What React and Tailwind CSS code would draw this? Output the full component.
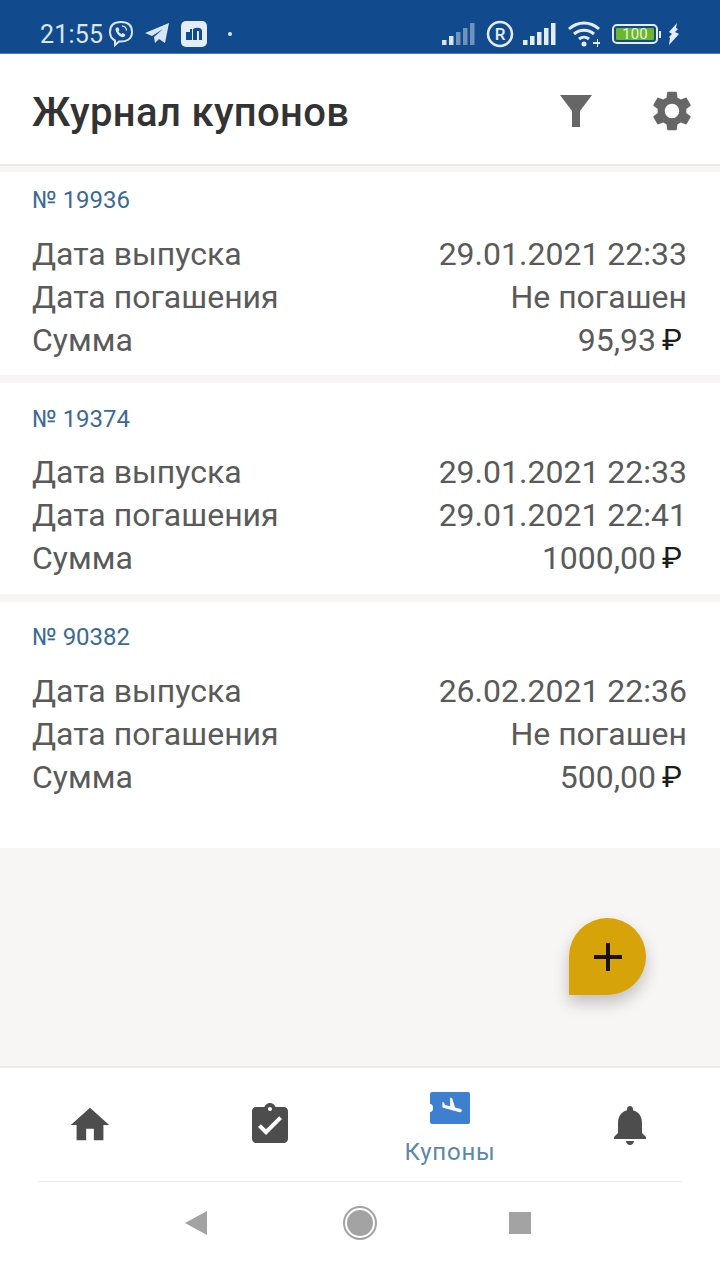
const GEAR = "M19.14,12.94c0.04-0.3,0.06-0.61,0.06-0.94c0-0.32-0.02-0.64-0.07-0.94l2.03-1.58c0.18-0.14,0.23-0.41,0.12-0.61l-1.92-3.32c-0.12-0.22-0.37-0.29-0.59-0.22l-2.39,0.96c-0.5-0.38-1.03-0.7-1.62-0.94L14.4,2.81c-0.04-0.24-0.24-0.41-0.48-0.41h-3.84c-0.24,0-0.43,0.17-0.47,0.41L9.25,5.35C8.66,5.59,8.12,5.92,7.63,6.29L5.24,5.33c-0.22-0.08-0.47,0-0.59,0.22L2.74,8.87C2.62,9.08,2.66,9.34,2.86,9.48l2.03,1.58C4.84,11.36,4.8,11.69,4.8,12s0.02,0.64,0.07,0.94l-2.03,1.58c-0.18,0.14-0.23,0.41-0.12,0.61l1.92,3.32c0.12,0.22,0.37,0.29,0.59,0.22l2.39-0.96c0.5,0.38,1.03,0.7,1.62,0.94l0.36,2.54c0.05,0.24,0.24,0.41,0.48,0.41h3.84c0.24,0,0.44-0.17,0.47-0.41l0.36-2.54c0.59-0.24,1.13-0.56,1.62-0.94l2.39,0.96c0.22,0.08,0.47,0,0.59-0.22l1.92-3.32c0.12-0.22,0.07-0.47-0.12-0.61L19.14,12.94z M12,15.6c-1.98,0-3.6-1.62-3.6-3.6s1.62-3.6,3.6-3.6s3.6,1.62,3.6,3.6S13.98,15.6,12,15.6z";

const coupons = [
  { no: "№ 19936", issued: "29.01.2021 22:33", paid: "Не погашен", sum: "95,93", box: "h-[203px] pt-[11px]", gap: "mb-[15px]" },
  { no: "№ 19374", issued: "29.01.2021 22:33", paid: "29.01.2021 22:41", sum: "1000,00", box: "h-[211px] pt-[19px]", gap: "mb-[14px]" },
  { no: "№ 90382", issued: "26.02.2021 22:36", paid: "Не погашен", sum: "500,00", box: "h-[246px] pt-[18px]", gap: "mb-[15px]" },
];

function Signal({ dim }) {
  const hs = [5, 9, 13, 17, 22];
  return (
    <svg width="34" height="22" viewBox="0 0 34 22">
      {hs.map((h, i) => (
        <rect key={i} x={i * 7} y={22 - h} width="4.5" height={h} fill="#e4edf7" opacity={dim ? (i < 2 ? 0.95 : 0.45) : 1} />
      ))}
    </svg>
  );
}

function StatusBar() {
  return (
    <div className="h-[54px] bg-[#124a8e] flex items-center pl-[40px] pr-[40px] pt-[15px] text-[#d9e6f5] border-b border-[#4d7db5]">
      <span className="text-[25px] leading-none tracking-[0.2px]">21:55</span>
      <svg className="ml-[5px]" width="26" height="28" viewBox="0 0 26 28" fill="none">
        <path d="M13 2c-6 0-11 2.500-11 10 0 4.500 2 7 5 8.500v4.500l4-3.500c7 .5 13-2 13-9.500C24 4.500 19 2 13 2z" stroke="#d9e6f5" strokeWidth="2" />
        <path d="M8 8c1-1 2-1 2.500 0l1 2-1 1c.5 1.500 1.500 2.500 3 3l1-1 2 1c1 .5 1 1.500 0 2.500-1.500 1.500-4 .5-6-1.500S6.500 9.500 8 8z" fill="#d9e6f5" />
        <path d="M14 6c2.500 0 4.500 2 4.500 4.500" stroke="#d9e6f5" strokeWidth="1.300" />
      </svg>
      <svg className="ml-[10px]" width="26" height="24" viewBox="0 0 26 24">
        <path d="M1 11 25 1l-4 20-6-4-4 4-1-6 9-8-11 7z" fill="#d9e6f5" />
      </svg>
      <div className="ml-[11px] w-[26px] h-[26px] rounded-[5px] bg-[#e3edf8] flex items-center justify-center">
        <svg width="18" height="16" viewBox="0 0 18 16">
          <path d="M1 6h4V3h2v11H1zM8 3c3-2 9-2 9 2v9h-3V5h-2v9H8z" fill="#124a8e" />
        </svg>
      </div>
      <span className="ml-[21px] w-[4px] h-[4px] rounded-full bg-[#d9e6f5]" />
      <div className="ml-auto flex items-center">
        <Signal dim />
        <svg className="ml-[10px]" width="28" height="28" viewBox="0 0 28 28" fill="none">
          <circle cx="14" cy="14" r="12" stroke="#e4edf7" strokeWidth="2.500" />
          <text x="14" y="20" textAnchor="middle" fontSize="17" fontFamily="Roboto, sans-serif" fontWeight="500" fill="#e4edf7">R</text>
        </svg>
        <div className="ml-[9px]"><Signal /></div>
        <svg className="ml-[10px]" width="36" height="28" viewBox="0 0 36 28" fill="none">
          <path d="M2 9c9-8 21-8 30 0M7 14c6-5 14-5 20 0M12 19c3-2.500 7-2.500 10 0" stroke="#e4edf7" strokeWidth="3" />
          <circle cx="17" cy="24" r="2.500" fill="#e4edf7" />
          <path d="M26 22h4v-3h1v3h2v2h-2v3h-1v-3h-4z" fill="#e4edf7" />
        </svg>
        <div className="ml-[9px] w-[46px] h-[20px] rounded-[5px] border-2 border-[#e4edf7] p-[2px] flex">
          <div className="w-[38px] h-[12px] bg-[#6cb52d] rounded-[1px] flex items-center justify-center text-[15px] leading-none text-[#e8f5d8]">100</div>
        </div>
        <span className="ml-[1px] w-[2px] h-[7px] bg-[#e4edf7]" />
        <svg className="ml-[7px]" width="12" height="22" viewBox="0 0 12 22">
          <path d="M9 0 1 9l3 2-3 3 1 1-1 7 10-11-4-2 3-3-2-1z" fill="#e4edf7" />
        </svg>
      </div>
    </div>
  );
}

function Header() {
  return (
    <div className="h-[112px] bg-white flex items-center pl-[32px] pr-[29px] border-b-2 border-[#e9e9e7] pt-[4px]">
      <h1 className="relative top-[2px] text-[40px] leading-none font-medium text-[#333] tracking-[0.35px]">Журнал купонов</h1>
      <svg className="ml-auto" width="32" height="32" viewBox="0 0 32 32">
        <path d="M0 0h32L20 16v16h-8V16z" fill="#666" />
      </svg>
      <svg className="ml-[56px] -mr-[5px]" width="48" height="48" viewBox="0 0 24 24">
        <path d={GEAR} fill="#666" />
      </svg>
    </div>
  );
}

function Row({ label, children }) {
  return (
    <div className="flex justify-between items-center h-[43px] text-[32px] leading-none text-[#5a5a5a]">
      <span>{label}</span>
      {children}
    </div>
  );
}

function Card({ c }) {
  return (
    <div className={`bg-white pl-[32px] pr-[33px] ${c.box}`}>
      <div className={`text-[24px] leading-[34px] text-[#3b6a96] ${c.gap}`}>{c.no}</div>
      <Row label="Дата выпуска"><span>{c.issued}</span></Row>
      <Row label="Дата погашения"><span>{c.paid}</span></Row>
      <Row label="Сумма">
        <span className="flex items-center pr-[5px]">
          {c.sum}
          <span className="ml-[6px] text-[#1c1c1c] text-[30px]">₽</span>
        </span>
      </Row>
    </div>
  );
}

function BottomNav() {
  return (
    <div className="h-[214px] bg-white border-t-2 border-[#ecebe9]">
      <div className="grid grid-cols-4 h-[113px]">
        <div className="flex items-center justify-center">
          <svg width="46" height="46" viewBox="0 0 24 24"><path d="M10 20v-6h4v6h5v-8h3L12 3 2 12h3v8z" fill="#4d4d4d" /></svg>
        </div>
        <div className="flex items-center justify-center">
          <svg width="48" height="48" viewBox="0 0 24 24"><path d="M19 3h-4.180C14.400 1.840 13.300 1 12 1c-1.300 0-2.400.84-2.820 2H5c-1.100 0-2 .9-2 2v14c0 1.100.9 2 2 2h14c1.100 0 2-.9 2-2V5c0-1.100-.9-2-2-2zm-7 0c.55 0 1 .45 1 1s-.45 1-1 1-1-.45-1-1 .45-1 1-1zm-2 14l-4-4 1.410-1.410L10 14.170l6.590-6.590L18 9l-8 8z" fill="#4d4d4d" /></svg>
        </div>
        <div className="flex flex-col items-center pt-[24px]">
          <svg width="40" height="32" viewBox="0 0 40 32">
            <path d="M2 0h36a2 2 0 0 1 2 2v28a2 2 0 0 1-2 2H2a2 2 0 0 1-2-2V20a3 4 0 0 0 0-8V2a2 2 0 0 1 2-2z" fill="#3f7fd0" />
            <path transform="translate(9.500 3.500) scale(1.050)" d="M9.680 13.270l4.350 1.160 5.310 1.420c.8.21 1.620-.26 1.840-1.060.21-.8-.26-1.620-1.060-1.840l-5.310-1.420-2.760-9.020L10.120 2v8.280L5.150 8.950l-.93-2.320-1.450-.39v5.170l1.600.43 5.310 1.430z" fill="#fff" />
          </svg>
          <span className="mt-[15px] text-[24px] leading-[26px] text-[#5c87aa] tracking-[0.8px]">Купоны</span>
        </div>
        <div className="flex items-center justify-center">
          <svg width="48" height="48" viewBox="0 0 24 24"><path d="M12 22c1.100 0 2-.9 2-2h-4c0 1.100.89 2 2 2zm6-6v-5c0-3.070-1.640-5.640-4.500-6.320V4c0-.83-.67-1.500-1.500-1.500s-1.500.67-1.500 1.500v.68C7.630 5.360 6 7.920 6 11v5l-2 2v1h16v-1l-2-2z" fill="#4d4d4d" /></svg>
        </div>
      </div>
      <div className="mx-[38px] h-px bg-[#f0f0ee]" />
      <div className="flex justify-center items-center h-[82px] pr-[4px]">
        <svg width="22" height="24" viewBox="0 0 22 24"><path d="M22 0v24L0 12z" fill="#a3a3a3" /></svg>
        <div className="ml-[136px] w-[34px] h-[34px] rounded-full border-2 border-[#a3a3a3] flex items-center justify-center">
          <div className="w-[26px] h-[26px] rounded-full bg-[#a3a3a3]" />
        </div>
        <div className="ml-[132px] w-[22px] h-[22px] bg-[#a3a3a3]" />
      </div>
    </div>
  );
}

export default function App() {
  return (
    <div className="relative w-[720px] h-[1280px] overflow-hidden flex flex-col bg-[#f7f6f4]" style={{ fontFamily: "Roboto, 'Noto Sans', sans-serif" }}>
      <StatusBar />
      <Header />
      <div className="flex-1 flex flex-col gap-[8px] pt-[6px]">
        {coupons.map((c) => <Card key={c.no} c={c} />)}
      </div>
      <BottomNav />
      <button className="absolute left-[569px] top-[918px] w-[77px] h-[77px] rounded-full rounded-bl-none bg-[#d6a408] shadow-[0_8px_16px_rgba(0,0,0,0.22)] flex items-center justify-center">
        <svg width="30" height="30" viewBox="0 0 30 30"><path d="M13 1h4v12h12v4H17v12h-4V17H1v-4h12z" fill="#1a1208" /></svg>
      </button>
    </div>
  );
}
